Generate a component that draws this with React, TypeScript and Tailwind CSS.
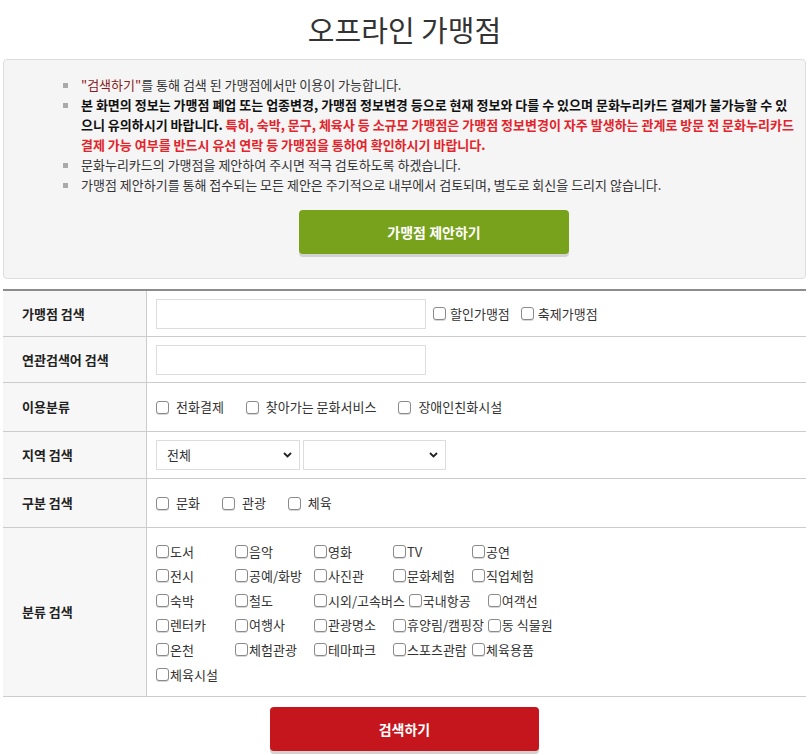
import React from 'react';

const FONT = { fontFamily: '"Noto Sans CJK KR", "Noto Sans", sans-serif' };

function Box() {
    return (
        <span className="inline-block w-[13px] h-[13px] shrink-0 rounded-[3px] border border-[#8a8a8a] bg-white shadow-[0_1px_0_#d8d8d8]" />
    );
}

function Check({ label, gap = 'ml-[7px]', className = '' }: { label: string; gap?: string; className?: string }) {
    return (
        <label className={`flex items-center ${className}`}>
            <Box />
            <span className={`${gap} text-[13px] text-[#333] whitespace-nowrap`}>{label}</span>
        </label>
    );
}

function Row({ label, height, children }: { label: string; height: string; children: React.ReactNode }) {
    return (
        <div className={`flex border-b border-[#cccccc] ${height}`}>
            <div className="w-[144px] shrink-0 bg-[#f7f7f7] border-r border-[#cccccc] flex items-center pl-[19px] text-[13px] font-bold text-[#222]">
                {label}
            </div>
            <div className="flex-1 flex items-center pl-[9px]">{children}</div>
        </div>
    );
}

function Select({ width, value }: { width: string; value: string }) {
    return (
        <div className={`relative ${width} h-[30px]`}>
            <select className="appearance-none w-full h-full border border-[#dddddd] bg-white pl-[10px] text-[13px] text-[#333] outline-none">
                <option>{value}</option>
            </select>
            <svg className="absolute right-[8px] top-[12px] pointer-events-none" width="9" height="6" viewBox="0 0 9 6">
                <path d="M1 1 L4.5 4.5 L8 1" fill="none" stroke="#222" strokeWidth="1.8" />
            </svg>
        </div>
    );
}

const CATEGORIES = [
    '도서', '음악', '영화', 'TV', '공연',
    '전시', '공예/화방', '사진관', '문화체험', '직업체험',
    '숙박', '철도', '시외/고속버스', '국내항공', '여객선',
    '렌터카', '여행사', '관광명소', '휴양림/캠핑장', '동 식물원',
    '온천', '체험관광', '테마파크', '스포츠관람', '체육용품',
    '체육시설',
];

function Bullet({ children }: { children: React.ReactNode }) {
    return (
        <li className="flex items-start">
            <span className="w-[18px] h-[20px] shrink-0 flex items-center">
                <span className="w-[5px] h-[5px] bg-[#aaaaaa]" />
            </span>
            <div className="leading-[20px]">{children}</div>
        </li>
    );
}

export default function App() {
    return (
        <div className="w-full bg-white text-[#333]" style={FONT}>
            {/* Title */}
            <div className="h-[59px] flex items-center justify-center">
                <h1 className="text-[29px] text-[#333] leading-none">오프라인 가맹점</h1>
            </div>

            {/* Notice box */}
            <div className="mx-[3px] border border-[#dddddd] rounded-[4px] bg-[#f5f5f5] pt-[15px] pb-[24px]">
                <ul className="pl-[59px] text-[13px] whitespace-nowrap">
                    <Bullet>
                        <span className="text-[#8b1a1a]">"검색하기"</span>를 통해 검색 된 가맹점에서만 이용이 가능합니다.
                    </Bullet>
                    <Bullet>
                        <span className="font-bold text-[#111]">
                            본 화면의 정보는 가맹점 폐업 또는 업종변경, 가맹점 정보변경 등으로 현재 정보와 다를 수 있으며 문화누리카드 결제가 불가능할 수 있
                            <br />
                            으니 유의하시기 바랍니다.
                        </span>{' '}
                        <span className="font-bold text-[#e3242b]">
                            특히, 숙박, 문구, 체육사 등 소규모 가맹점은 가맹점 정보변경이 자주 발생하는 관계로 방문 전 문화누리카드
                            <br />
                            결제 가능 여부를 반드시 유선 연락 등 가맹점을 통하여 확인하시기 바랍니다.
                        </span>
                    </Bullet>
                    <Bullet>문화누리카드의 가맹점을 제안하여 주시면 적극 검토하도록 하겠습니다.</Bullet>
                    <Bullet>가맹점 제안하기를 통해 접수되는 모든 제안은 주기적으로 내부에서 검토되며, 별도로 회신을 드리지 않습니다.</Bullet>
                </ul>
                <div className="flex pl-[295px] mt-[15px]">
                    <button className="w-[270px] h-[44px] rounded-[4px] bg-[#78a21b] text-white text-[14px] font-bold shadow-[0_3px_0_#d2d2d2]">
                        가맹점 제안하기
                    </button>
                </div>
            </div>

            {/* Search table */}
            <div className="mx-[3px] mt-[10px] border-t-2 border-[#8c8c8c]">
                <Row label="가맹점 검색" height="h-[46px]">
                    <input className="w-[270px] h-[30px] border border-[#dddddd] outline-none px-2 text-[13px]" />
                    <Check label="할인가맹점" gap="ml-[4px]" className="ml-[7px]" />
                    <Check label="축제가맹점" gap="ml-[4px]" className="ml-[11px]" />
                </Row>
                <Row label="연관검색어 검색" height="h-[46px]">
                    <input className="w-[270px] h-[30px] border border-[#dddddd] outline-none px-2 text-[13px]" />
                </Row>
                <Row label="이용분류" height="h-[49px]">
                    <div className="flex items-center gap-[22px]">
                        <Check label="전화결제" />
                        <Check label="찾아가는 문화서비스" />
                        <Check label="장애인친화시설" />
                    </div>
                </Row>
                <Row label="지역 검색" height="h-[47px]">
                    <div className="flex items-center gap-[3px]">
                        <Select width="w-[144px]" value="전체" />
                        <Select width="w-[143px]" value="" />
                    </div>
                </Row>
                <Row label="구분 검색" height="h-[49px]">
                    <div className="flex items-center gap-[22px]">
                        <Check label="문화" />
                        <Check label="관광" />
                        <Check label="체육" />
                    </div>
                </Row>
                <Row label="분류 검색" height="h-[169px]">
                    <div className="w-[420px] flex flex-wrap self-start pt-[11px]">
                        {CATEGORIES.map((c) => (
                            <div key={c} className="min-w-[75px] mr-[4px] h-[24.6px] flex items-center">
                                <Check label={c} gap="ml-[1px]" />
                            </div>
                        ))}
                    </div>
                </Row>
            </div>

            <div className="flex justify-center mt-[10px] pb-[6px]">
                <button className="w-[269px] h-[44px] rounded-[4px] bg-[#c4161c] text-white text-[14px] font-bold shadow-[0_3px_0_#d2d2d2]">
                    검색하기
                </button>
            </div>
        </div>
    );
}
